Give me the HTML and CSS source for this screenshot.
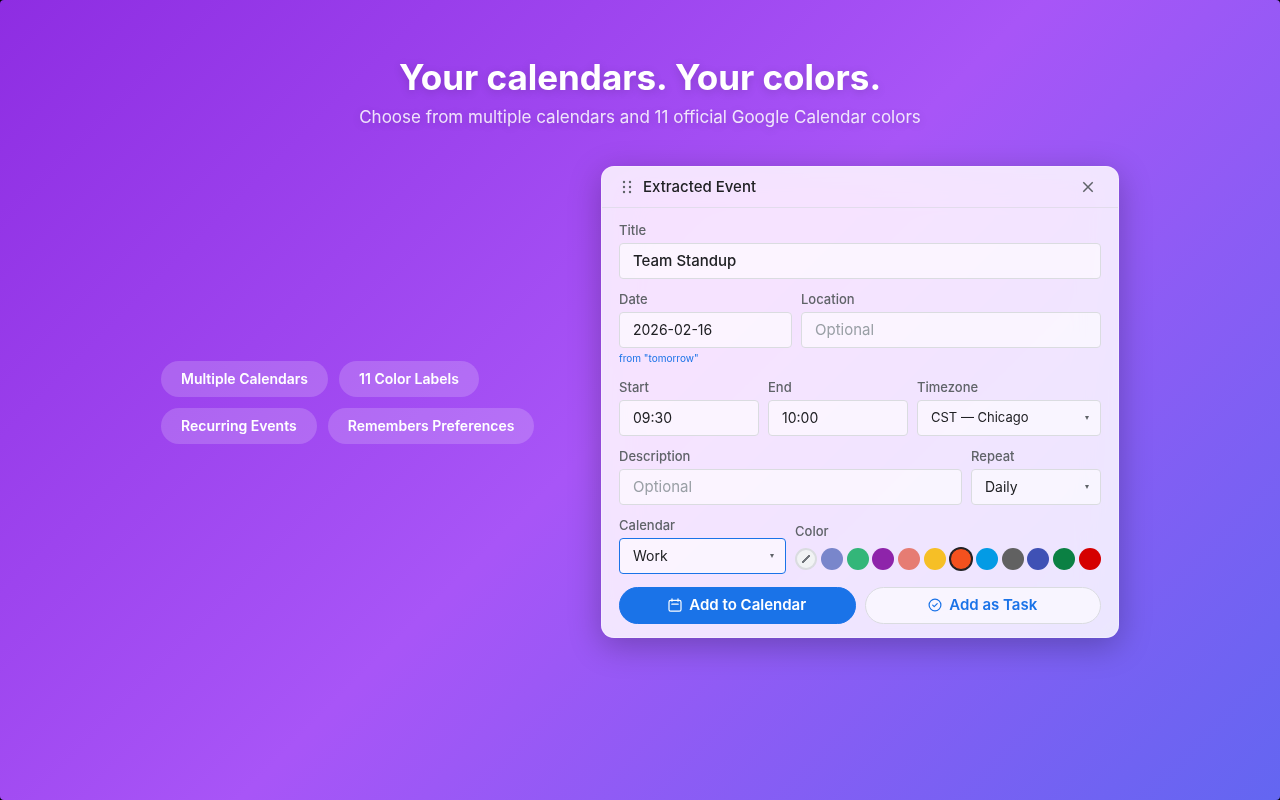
FILE: index.html
```html
<!DOCTYPE html>
<html lang="en">
<head>
    <meta charset="UTF-8">
    <meta name="viewport" content="width=device-width, initial-scale=1.0">
    <title>Your calendars. Your colors.</title>
    <link rel="stylesheet" href="styles.css">
</head>
<body>
    <div class="stage">
        <header class="hero">
            <h1>Your calendars. Your colors.</h1>
            <p>Choose from multiple calendars and 11 official Google Calendar colors</p>
        </header>
        <main class="content">
            <ul class="pills">
                <li>Multiple Calendars</li>
                <li>11 Color Labels</li>
                <li>Recurring Events</li>
                <li>Remembers Preferences</li>
            </ul>
            <form class="card">
                <div class="card-header">
                    <svg class="grip" width="12" height="14" viewBox="0 0 12 14" fill="#5f6368">
                        <circle cx="3" cy="2" r="1.2"/><circle cx="9" cy="2" r="1.2"/>
                        <circle cx="3" cy="7" r="1.2"/><circle cx="9" cy="7" r="1.2"/>
                        <circle cx="3" cy="12" r="1.2"/><circle cx="9" cy="12" r="1.2"/>
                    </svg>
                    <h2>Extracted Event</h2>
                    <button type="button" class="close" aria-label="Close">
                        <svg width="12" height="12" viewBox="0 0 12 12" fill="none" stroke="#5f6368" stroke-width="1.5">
                            <path d="M1.3 1.3l9.4 9.4M10.7 1.3l-9.4 9.4"/>
                        </svg>
                    </button>
                </div>
                <div class="card-body">
                    <div class="field">
                        <label for="title">Title</label>
                        <input type="text" id="title" class="strong" value="Team Standup">
                    </div>
                    <div class="row row-date">
                        <div class="field">
                            <label for="date">Date</label>
                            <input type="text" id="date" value="2026-02-16">
                            <span class="hint">from "tomorrow"</span>
                        </div>
                        <div class="field">
                            <label for="location">Location</label>
                            <input type="text" id="location" placeholder="Optional">
                        </div>
                    </div>
                    <div class="row row-time">
                        <div class="field">
                            <label for="start">Start</label>
                            <input type="text" id="start" value="09:30">
                        </div>
                        <div class="field">
                            <label for="end">End</label>
                            <input type="text" id="end" value="10:00">
                        </div>
                        <div class="field">
                            <label for="timezone">Timezone</label>
                            <div class="select small">
                                <select id="timezone"><option>CST — Chicago</option></select>
                            </div>
                        </div>
                    </div>
                    <div class="row row-desc">
                        <div class="field">
                            <label for="description">Description</label>
                            <input type="text" id="description" placeholder="Optional">
                        </div>
                        <div class="field">
                            <label for="repeat">Repeat</label>
                            <div class="select">
                                <select id="repeat"><option>Daily</option></select>
                            </div>
                        </div>
                    </div>
                    <div class="row row-calendar">
                        <div class="field">
                            <label for="calendar">Calendar</label>
                            <div class="select active">
                                <select id="calendar"><option>Work</option></select>
                            </div>
                        </div>
                        <fieldset class="colors">
                            <legend>Color</legend>
                            <div class="swatches">
                                <input type="radio" name="color" class="none" aria-label="Default">
                                <input type="radio" name="color" class="lavender" aria-label="Lavender">
                                <input type="radio" name="color" class="sage" aria-label="Sage">
                                <input type="radio" name="color" class="grape" aria-label="Grape">
                                <input type="radio" name="color" class="flamingo" aria-label="Flamingo">
                                <input type="radio" name="color" class="banana" aria-label="Banana">
                                <input type="radio" name="color" class="tangerine" aria-label="Tangerine" checked>
                                <input type="radio" name="color" class="peacock" aria-label="Peacock">
                                <input type="radio" name="color" class="graphite" aria-label="Graphite">
                                <input type="radio" name="color" class="blueberry" aria-label="Blueberry">
                                <input type="radio" name="color" class="basil" aria-label="Basil">
                                <input type="radio" name="color" class="tomato" aria-label="Tomato">
                            </div>
                        </fieldset>
                    </div>
                    <div class="row row-actions">
                        <button type="button" class="btn primary">
                            <svg width="14" height="14" viewBox="0 0 14 14" fill="none" stroke="currentColor" stroke-width="1.2" stroke-linecap="round">
                                <rect x="1" y="2.4" width="12" height="10.8" rx="1.6"/>
                                <path d="M3.8 6.2h6.4M4 .8v2.4M10 .8v2.4"/>
                            </svg>
                            Add to Calendar
                        </button>
                        <button type="button" class="btn secondary">
                            <svg width="14" height="14" viewBox="0 0 14 14" fill="none" stroke="currentColor" stroke-width="1.2" stroke-linecap="round" stroke-linejoin="round">
                                <circle cx="7" cy="7" r="5.9"/>
                                <path d="M4.7 7.2l1.5 1.5 3-3"/>
                            </svg>
                            Add as Task
                        </button>
                    </div>
                </div>
            </form>
        </main>
    </div>
</body>
</html>
```
FILE: styles.css
```css
* {
    box-sizing: border-box;
}
body {
    margin: 0;
    background: #000;
    font-family: "Google Sans", Inter, "Liberation Sans", sans-serif;
    color: #202124;
}
h1, h2, p, ul, fieldset {
    margin: 0;
    padding: 0;
}
.stage {
    min-height: 100vh;
    padding: 53px 40px;
    border-radius: 4px;
    background: linear-gradient(135deg, #8e2de2 0%, #a855f7 50%, #6366f1 100%);
}
.hero {
    text-align: center;
    color: #fff;
    text-shadow: 0 2px 10px rgba(0, 0, 0, 0.15);
}
.hero h1 {
    font-size: 35px;
    line-height: 48px;
    font-weight: 700;
}
.hero p {
    margin-top: 4px;
    font-size: 17px;
    line-height: 24px;
    color: rgba(255, 255, 255, 0.85);
}
.content {
    display: flex;
    justify-content: center;
    align-items: center;
    gap: 60px;
    margin-top: 37px;
}
.pills {
    display: flex;
    flex-wrap: wrap;
    gap: 11px;
    flex: 0 1 380px;
    list-style: none;
}
.pills li {
    padding: 8px 20px;
    border-radius: 18px;
    background: rgba(255, 255, 255, 0.18);
    color: #fff;
    font-size: 14px;
    line-height: 20px;
    font-weight: 600;
}

/* event card */
.card {
    flex: 0 1 518px;
    border: 1px solid rgba(255, 255, 255, 0.3);
    border-radius: 13px;
    background: rgba(255, 255, 255, 0.85);
    backdrop-filter: blur(20px) saturate(150%);
    box-shadow: 0 8px 32px rgba(0, 0, 0, 0.25);
}
.card-header {
    display: flex;
    align-items: center;
    gap: 10px;
    height: 41px;
    padding: 0 17px 0 19px;
    border-bottom: 1px solid #e2dcec;
}
.card-header h2 {
    flex: 1;
    font-size: 15px;
    line-height: 20px;
    font-weight: 500;
}
.close {
    display: flex;
    align-items: center;
    justify-content: center;
    width: 26px;
    height: 26px;
    padding: 0;
    border: none;
    background: none;
    cursor: pointer;
}
.card-body {
    display: flex;
    flex-direction: column;
    gap: 13px;
    padding: 15px 17px 13px;
}
.row {
    display: grid;
    gap: 9px;
}
.row-date {
    grid-template-columns: 173fr 300fr;
}
.row-time {
    grid-template-columns: 140fr 140fr 184fr;
}
.row-desc {
    grid-template-columns: 343fr 130fr;
}
.row-calendar {
    grid-template-columns: 167fr 306fr;
    align-items: end;
}
.row-actions {
    grid-template-columns: 1fr 1fr;
}
.field {
    min-width: 0;
}
.field label, .colors legend {
    display: block;
    margin-bottom: 6px;
    padding: 0;
    font-size: 13px;
    line-height: 14px;
    font-weight: 500;
    color: #5f6368;
}
.field input, .select select {
    display: block;
    width: 100%;
    height: 36px;
    padding: 0 13px 2px;
    border: 1px solid #dadce0;
    border-radius: 4px;
    background: rgba(255, 255, 255, 0.6);
    color: #202124;
    font-family: inherit;
    font-size: 14px;
}
.field input::placeholder {
    color: #9aa0a6;
    font-size: 15px;
}
.field .strong {
    font-size: 15px;
    font-weight: 500;
}
.hint {
    display: block;
    padding-top: 1px;
    font-size: 10px;
    line-height: 18px;
    color: #1a73e8;
}
.select {
    position: relative;
}
.select select {
    appearance: none;
}
.select.small select {
    font-size: 13px;
}
.select.active select {
    border-color: #1a73e8;
}
.select::after {
    content: "";
    position: absolute;
    top: 16px;
    right: 12px;
    border: 2px solid transparent;
    border-top: 4px solid #5f6368;
    border-bottom: none;
    pointer-events: none;
}

/* color picker */
.colors {
    min-width: 0;
    border: none;
}
.swatches {
    display: flex;
    justify-content: space-between;
    align-items: center;
    height: 30px;
}
.swatches input {
    appearance: none;
    width: 22px;
    height: 22px;
    margin: 0;
    border-radius: 50%;
    cursor: pointer;
}
.swatches input:checked {
    border: 1px solid #202124;
    box-shadow: 0 0 0 1px #202124;
}
.swatches .none {
    border: 2px solid #dadce0;
    background: linear-gradient(135deg, transparent 43%, #70757a 43%, #70757a 57%, transparent 57%) center / 8px 8px no-repeat #f1f3f4;
}
.lavender { background: #7986cb; }
.sage { background: #33b679; }
.grape { background: #8e24aa; }
.flamingo { background: #e67c73; }
.banana { background: #f6bf26; }
.tangerine { background: #f4511e; }
.peacock { background: #039be5; }
.graphite { background: #616161; }
.blueberry { background: #3f51b5; }
.basil { background: #0b8043; }
.tomato { background: #d50000; }

.btn {
    display: flex;
    align-items: center;
    justify-content: center;
    gap: 7px;
    height: 37px;
    padding: 0 0 2px;
    border: 1px solid #1a73e8;
    border-radius: 19px;
    font-family: inherit;
    font-size: 15px;
    font-weight: 600;
    cursor: pointer;
}
.primary {
    background: #1a73e8;
    color: #fff;
}
.secondary {
    border-color: #dadce0;
    background: rgba(255, 255, 255, 0.6);
    color: #1a73e8;
}
@media (max-width: 900px) {
    .content {
        flex-direction: column;
    }
    .pills, .card {
        flex-basis: auto;
    }
}
```
